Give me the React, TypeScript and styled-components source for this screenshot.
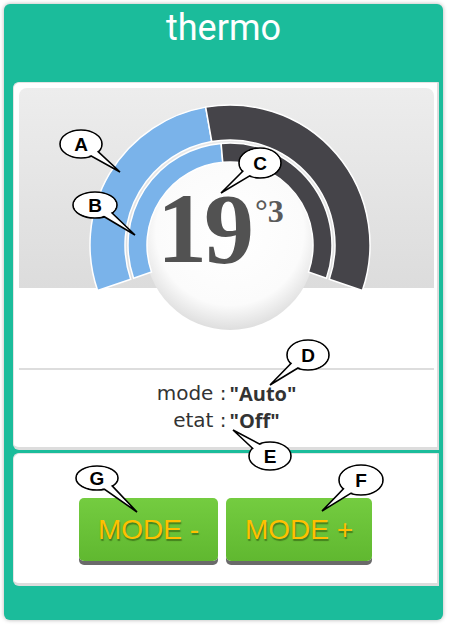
import React from "react";
import styled, { createGlobalStyle } from "styled-components";

const GlobalStyle = createGlobalStyle`
  html, body {
    margin: 0;
    padding: 0;
    background: #ffffff;
  }
  body {
    font-family: "Roboto", "Liberation Sans", sans-serif;
  }
`;

// gauge geometry, in page coordinates (the svg viewBox starts at the gauge box)
const CX = 230;
const CY = 245;
const START = 161;
const END = 379;

const rad = (deg: number) => (deg * Math.PI) / 180;

function ringPath(rOut: number, rIn: number, a0: number, a1: number) {
  const p = (r: number, a: number) =>
    `${(CX + r * Math.cos(rad(a))).toFixed(2)} ${(CY + r * Math.sin(rad(a))).toFixed(2)}`;
  const large = a1 - a0 > 180 ? 1 : 0;
  return [
    `M ${p(rOut, a0)}`,
    `A ${rOut} ${rOut} 0 ${large} 1 ${p(rOut, a1)}`,
    `L ${p(rIn, a1)}`,
    `A ${rIn} ${rIn} 0 ${large} 0 ${p(rIn, a0)}`,
    "Z",
  ].join(" ");
}

interface Callout {
  label: string;
  cx: number;
  cy: number;
  rx: number;
  ry: number;
  tx: number;
  ty: number;
}

const callouts: Callout[] = [
  { label: "A", cx: 81, cy: 144, rx: 21, ry: 14, tx: 120, ty: 172 },
  { label: "B", cx: 95, cy: 205, rx: 22, ry: 13, tx: 135, ty: 235 },
  { label: "C", cx: 260, cy: 163, rx: 21, ry: 15, tx: 221, ty: 193 },
  { label: "D", cx: 308, cy: 355, rx: 21, ry: 15, tx: 270, ty: 385 },
  { label: "E", cx: 270, cy: 456, rx: 21, ry: 14, tx: 233, ty: 430 },
  { label: "F", cx: 361, cy: 480, rx: 22, ry: 15, tx: 322, ty: 511 },
  { label: "G", cx: 97, cy: 478, rx: 21, ry: 12, tx: 137, ty: 512 },
];

function Bubble({ c }: { c: Callout }) {
  // tail base sits just inside the ellipse, on the side facing the tip
  const a = Math.atan2((c.ty - c.cy) / c.ry, (c.tx - c.cx) / c.rx);
  const edge = (d: number) =>
    `${c.cx + c.rx * 0.8 * Math.cos(a + d)},${c.cy + c.ry * 0.8 * Math.sin(a + d)}`;
  return (
    <g>
      <ellipse cx={c.cx} cy={c.cy} rx={c.rx} ry={c.ry} fill="#fff" stroke="#000" strokeWidth={1.6} />
      <polygon
        points={`${edge(-0.32)} ${c.tx},${c.ty} ${edge(0.32)}`}
        fill="#fff"
        stroke="#000"
        strokeWidth={1.6}
        strokeLinejoin="miter"
      />
      <ellipse cx={c.cx} cy={c.cy} rx={c.rx - 1} ry={c.ry - 1} fill="#fff" />
      <BubbleText x={c.cx} y={c.cy + 7} textAnchor="middle">
        {c.label}
      </BubbleText>
    </g>
  );
}

export default function App() {
  return (
    <Page>
      <GlobalStyle />
      <Card>
        <Title>thermo</Title>
        <Panel>
          <GaugeBox>
            <GaugeSvg viewBox="19 88 414 200" width={414} height={200}>
              <defs>
                <radialGradient id="dial" cx="50%" cy="42%" r="58%">
                  <stop offset="0%" stopColor="#ffffff" />
                  <stop offset="75%" stopColor="#fbfbfb" />
                  <stop offset="100%" stopColor="#dedede" />
                </radialGradient>
              </defs>
              <circle cx={CX} cy={CY} r={85} fill="url(#dial)" />
              <path d={ringPath(140, 105, START, 260)} fill="#7ab3ea" stroke="#fff" strokeWidth={1.5} />
              <path d={ringPath(140, 105, 260, END)} fill="#454449" stroke="#fff" strokeWidth={1.5} />
              <path d={ringPath(102, 83, START, 265)} fill="#7ab3ea" stroke="#fff" strokeWidth={1.5} />
              <path d={ringPath(102, 83, 265, END)} fill="#454449" stroke="#fff" strokeWidth={1.5} />
              <BigValue x={157} y={262}>
                19
              </BigValue>
              <SmallValue x={255} y={222}>
                °3
              </SmallValue>
            </GaugeSvg>
          </GaugeBox>
          <Separator />
          <InfoGrid>
            <InfoLabel>mode :</InfoLabel>
            <InfoValue>"Auto"</InfoValue>
            <InfoLabel>etat :</InfoLabel>
            <InfoValue>"Off"</InfoValue>
          </InfoGrid>
        </Panel>
        <ButtonPanel>
          <ModeButton>MODE -</ModeButton>
          <ModeButton>MODE +</ModeButton>
        </ButtonPanel>
      </Card>
      <Overlay viewBox="0 0 450 642" width={450} height={642}>
        {callouts.map((c) => (
          <Bubble key={c.label} c={c} />
        ))}
      </Overlay>
    </Page>
  );
}

const Page = styled.div`
  position: relative;
  width: 450px;
  height: 642px;
  padding-top: 4px;
  box-sizing: border-box;
  overflow: hidden;
`;

const Card = styled.div`
  margin-left: 4px;
  width: 439px;
  height: 616px;
  box-sizing: border-box;
  padding: 0 4px 0 9px;
  background-color: #1bbc9b;
  border-radius: 6px;
  box-shadow: 0 0 4px rgba(0, 0, 0, 0.3);
  display: flex;
  flex-direction: column;
`;

const Title = styled.div`
  height: 78px;
  box-sizing: border-box;
  padding-top: 2px;
  margin-left: -9px;
  margin-right: -4px;
  text-align: center;
  color: #ffffff;
  font-family: "Roboto", "Liberation Sans", sans-serif;
  font-size: 36px;
  line-height: 44px;
`;

const Panel = styled.div`
  background: #ffffff;
  border: 1px solid #e4e4e4;
  border-right: 2px solid #dddddd;
  border-bottom: 3px solid #dddddd;
  border-radius: 6px 0 0 6px;
  padding: 5px 3px 0 5px;
  display: flex;
  flex-direction: column;
`;

const GaugeBox = styled.div`
  height: 200px;
  margin-bottom: 80px;
  border-radius: 8px 8px 0 0;
  background: linear-gradient(#ededed, #dcdcdc);
`;

const GaugeSvg = styled.svg`
  display: block;
  overflow: visible;
`;

const BigValue = styled.text`
  font-family: "Liberation Serif", "Times New Roman", serif;
  font-weight: bold;
  font-size: 100px;
  letter-spacing: -3px;
  fill: #525252;
`;

const SmallValue = styled.text`
  font-family: "Liberation Serif", "Times New Roman", serif;
  font-weight: bold;
  font-size: 32px;
  fill: #5a5a5a;
`;

const Separator = styled.div`
  height: 2px;
  background: #dddddd;
`;

const InfoGrid = styled.div`
  display: grid;
  grid-template-columns: 1fr 1fr;
  padding: 10px 0 13px;
  font-size: 20px;
  line-height: 27px;
  color: #333333;
`;

const InfoLabel = styled.span`
  text-align: right;
  white-space: pre;
  font-family: "DejaVu Sans", "Verdana", sans-serif;
`;

const InfoValue = styled.span`
  text-align: left;
  padding-left: 3px;
  font-family: "Open Sans", "DejaVu Sans", sans-serif;
  font-weight: bold;
`;

const ButtonPanel = styled.div`
  margin-top: 3px;
  background: #ffffff;
  border: 1px solid #e4e4e4;
  border-right: 2px solid #dddddd;
  border-bottom: 3px solid #dddddd;
  border-radius: 6px 0 0 6px;
  padding: 44px 0 22px;
  display: flex;
  justify-content: center;
  gap: 8px;
`;

const ModeButton = styled.button`
  height: 63px;
  padding: 0 19px;
  border: none;
  border-radius: 5px;
  background: linear-gradient(#74cc40, #60b830);
  box-shadow: 0 4px 0 #6a6a6a;
  color: #ffc000;
  font-family: "Liberation Sans", "Arial", sans-serif;
  font-size: 28px;
  text-shadow: 1px 2px 1px rgba(40, 80, 10, 0.55);
  cursor: pointer;
`;

const Overlay = styled.svg`
  position: absolute;
  top: 0;
  left: 0;
  pointer-events: none;
`;

const BubbleText = styled.text`
  font-family: "Liberation Sans", "Arial", sans-serif;
  font-weight: bold;
  font-size: 19px;
  fill: #000;
`;
